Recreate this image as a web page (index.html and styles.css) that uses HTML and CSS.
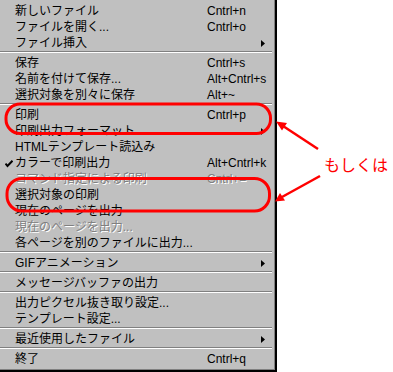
FILE: index.html
```html
<!DOCTYPE html>
<html lang="ja">
<head>
<meta charset="utf-8">
<title>メニュー</title>
<link rel="stylesheet" href="styles.css">
</head>
<body>
<div class="page">
  <div class="menu">
    <div class="menu-inner">
      <div class="item"><span class="chk"></span><span class="label">新しいファイル</span><span class="key">Cntrl+n</span><span class="sub"></span></div>
      <div class="item"><span class="chk"></span><span class="label">ファイルを開く...</span><span class="key">Cntrl+o</span><span class="sub"></span></div>
      <div class="item"><span class="chk"></span><span class="label">ファイル挿入</span><span class="key"></span><span class="sub"><svg class="arrow" width="4" height="7" viewBox="0 0 4 7"><polygon points="0,0 4,3.5 0,7"/></svg></span></div>
      <div class="sep"></div>
      <div class="item"><span class="chk"></span><span class="label">保存</span><span class="key">Cntrl+s</span><span class="sub"></span></div>
      <div class="item"><span class="chk"></span><span class="label">名前を付けて保存...</span><span class="key">Alt+Cntrl+s</span><span class="sub"></span></div>
      <div class="item"><span class="chk"></span><span class="label">選択対象を別々に保存</span><span class="key">Alt+~</span><span class="sub"></span></div>
      <div class="sep"></div>
      <div class="item"><span class="chk"></span><span class="label">印刷</span><span class="key">Cntrl+p</span><span class="sub"></span></div>
      <div class="item"><span class="chk"></span><span class="label">印刷出力フォーマット</span><span class="key"></span><span class="sub"><svg class="arrow" width="4" height="7" viewBox="0 0 4 7"><polygon points="0,0 4,3.5 0,7"/></svg></span></div>
      <div class="item"><span class="chk"></span><span class="label">HTMLテンプレート読込み</span><span class="key"></span><span class="sub"></span></div>
      <div class="item"><span class="chk"><svg class="check" width="8" height="8" viewBox="0 0 8 8"><polyline points="0.5,3.5 2.5,6 7.5,0.8"/></svg></span><span class="label">カラーで印刷出力</span><span class="key">Alt+Cntrl+k</span><span class="sub"></span></div>
      <div class="item disabled"><span class="chk"></span><span class="label">コマンド指定による印刷</span><span class="key">Cntrl+=</span><span class="sub"></span></div>
      <div class="item"><span class="chk"></span><span class="label">選択対象の印刷</span><span class="key"></span><span class="sub"></span></div>
      <div class="item"><span class="chk"></span><span class="label">現在のページを出力</span><span class="key"></span><span class="sub"></span></div>
      <div class="item disabled"><span class="chk"></span><span class="label">現在のページを出力...</span><span class="key"></span><span class="sub"></span></div>
      <div class="item"><span class="chk"></span><span class="label">各ページを別のファイルに出力...</span><span class="key"></span><span class="sub"></span></div>
      <div class="sep"></div>
      <div class="item"><span class="chk"></span><span class="label">GIFアニメーション</span><span class="key"></span><span class="sub"><svg class="arrow" width="4" height="7" viewBox="0 0 4 7"><polygon points="0,0 4,3.5 0,7"/></svg></span></div>
      <div class="sep"></div>
      <div class="item"><span class="chk"></span><span class="label">メッセージバッファの出力</span><span class="key"></span><span class="sub"></span></div>
      <div class="sep"></div>
      <div class="item"><span class="chk"></span><span class="label">出力ピクセル抜き取り設定...</span><span class="key"></span><span class="sub"></span></div>
      <div class="item"><span class="chk"></span><span class="label">テンプレート設定...</span><span class="key"></span><span class="sub"></span></div>
      <div class="sep"></div>
      <div class="item"><span class="chk"></span><span class="label">最近使用したファイル</span><span class="key"></span><span class="sub"><svg class="arrow" width="4" height="7" viewBox="0 0 4 7"><polygon points="0,0 4,3.5 0,7"/></svg></span></div>
      <div class="sep"></div>
      <div class="item"><span class="chk"></span><span class="label">終了</span><span class="key">Cntrl+q</span><span class="sub"></span></div>
    </div>
  </div>

  <svg class="annot" width="393" height="372" viewBox="0 0 393 372">
    <rect class="ring" x="6" y="104" width="264.5" height="29.5" rx="14" ry="14"/>
    <rect class="ring" x="7" y="178.5" width="262.5" height="32.5" rx="15" ry="15"/>
    <line class="arr" x1="318" y1="149" x2="283" y2="126"/>
    <polygon class="head" points="276,121.5 287,123 282,130.5"/>
    <line class="arr" x1="320" y1="176" x2="282" y2="197"/>
    <polygon class="head" points="275,201.5 280,193 285,200.5"/>
  </svg>
  <div class="note">もしくは</div>
</div>
</body>
</html>
```

FILE: styles.css
```css
html, body {
  margin: 0;
  padding: 0;
  background: #ffffff;
}

body {
  font-family: "Liberation Sans", "Noto Sans CJK JP", sans-serif;
  font-size: 12px;
  color: #000000;
}

.page {
  position: relative;
  width: 393px;
  height: 372px;
  overflow: hidden;
}

.menu {
  width: 277px;
  height: 372px;
  box-sizing: border-box;
  border-right: 2px solid #000000;
  border-bottom: 2px solid #000000;
}

.menu-inner {
  box-sizing: border-box;
  height: 370px;
  background: #c0c0c0;
  border-right: 1px solid #808080;
  border-bottom: 1px solid #808080;
  padding-top: 2px;
}

.item {
  display: grid;
  grid-template-columns: 15px 192px 54px 13px;
  height: 16px;
  line-height: 18px;
  white-space: nowrap;
}

.label,
.key {
  overflow: visible;
}

.chk {
  display: flex;
  align-items: center;
  justify-content: flex-end;
  padding-right: 2px;
  padding-top: 2px;
}

.check {
  fill: none;
  stroke: #000000;
  stroke-width: 2;
}

.sub {
  display: flex;
  align-items: center;
  padding-top: 1px;
}

.arrow {
  fill: #000000;
}

.disabled {
  color: #808080;
  text-shadow: 1px 1px 0 #ffffff;
}

.sep {
  height: 0;
  margin: 1px 2px 1px 0;
  border-top: 1px solid #808080;
  border-bottom: 1px solid #ffffff;
}

.annot {
  position: absolute;
  left: 0;
  top: 0;
  pointer-events: none;
}

.ring {
  fill: none;
  stroke: #ff0000;
  stroke-width: 3;
}

.arr {
  stroke: #ff0000;
  stroke-width: 2.5;
}

.head {
  fill: #ff0000;
}

.note {
  position: absolute;
  left: 324px;
  top: 154px;
  font-family: "Noto Sans CJK JP", sans-serif;
  font-size: 16px;
  line-height: 20px;
  color: #ff0000;
  white-space: nowrap;
}
```
